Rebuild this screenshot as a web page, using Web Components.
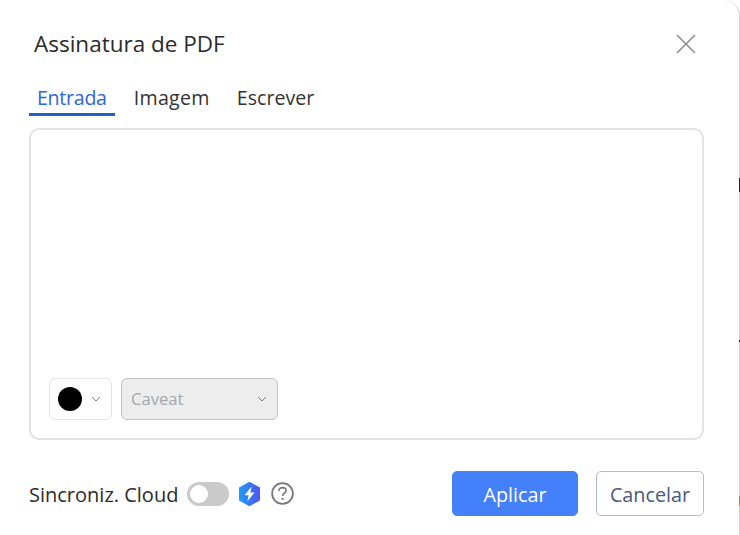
<!DOCTYPE html>
<html lang="pt">
<head>
<meta charset="utf-8">
<title>Assinatura de PDF</title>
<style>
  html, body { margin: 0; height: 100%; background: #fff; }
  body { font-family: "Open Sans", "Noto Sans", sans-serif; overflow: hidden; }
</style>
</head>
<body>
<pdf-sign-dialog>
  <span slot="title">Assinatura de PDF</span>
  <sign-tabs slot="tabs"></sign-tabs>
  <sign-pad slot="pad"></sign-pad>
  <cloud-sync slot="sync">Sincroniz. Cloud</cloud-sync>
  <sign-button slot="actions" kind="primary">Aplicar</sign-button>
  <sign-button slot="actions">Cancelar</sign-button>
</pdf-sign-dialog>

<script>
// Dialog frame
class PdfSignDialog extends HTMLElement {
  constructor() {
    super();
    this.attachShadow({ mode: 'open' });
    this.shadowRoot.innerHTML = `
      <style>
        :host { display: block; box-sizing: border-box; width: 740px; height: 535px; position: relative; background: #fff; }
        .frame { box-sizing: border-box; height: 535px; width: 740px; background: #fff; border-right: 1px solid #cfcfcf; border-top-right-radius: 16px; padding: 0 35px 0 29px; display: flex; flex-direction: column; }
        header { height: 88px; display: flex; align-items: center; justify-content: space-between; padding: 0 8px 0 5px; box-sizing: border-box; }
        .title { font-size: 22.5px; color: #2b2b2b; white-space: nowrap; margin-bottom: 2px; }
        svg { display: block; }
        footer { margin-top: 31px; display: flex; align-items: center; justify-content: space-between; }
        .actions { display: flex; gap: 18px; }
        .mark { position: absolute; right: 0; width: 1px; }
      </style>
      <div class="frame">
        <header>
          <span class="title"><slot name="title"></slot></span>
          <svg width="20" height="20" viewBox="0 0 20 20"><path d="M1 1L19 19M19 1L1 19" stroke="#858585" stroke-width="1.4" fill="none"/></svg>
        </header>
        <slot name="tabs"></slot>
        <slot name="pad"></slot>
        <footer>
          <slot name="sync"></slot>
          <div class="actions"><slot name="actions"></slot></div>
        </footer>
      </div>
      <i class="mark" style="top:178px;height:14px;background:#222"></i>
      <i class="mark" style="top:340px;height:2px;background:#222"></i>
      <i class="mark" style="top:496px;height:10px;background:#b08a5a"></i>
    `;
  }
}

// Entrada / Imagem / Escrever
class SignTabs extends HTMLElement {
  constructor() {
    super();
    this.attachShadow({ mode: 'open' });
    this.shadowRoot.innerHTML = `
      <style>
        :host { display: flex; height: 28px; font-size: 19.6px; color: #333; margin-bottom: 12px; }
        div { box-sizing: border-box; height: 28px; line-height: 20px; padding: 0 8px; margin-right: 11px; white-space: nowrap; }
        .on { color: #2e66d8; border-bottom: 3px solid #2260c9; letter-spacing: -0.28px; }
        .wide { letter-spacing: 0.3px; }
      </style>
      <div class="on">Entrada</div>
      <div class="wide">Imagem</div>
      <div>Escrever</div>
    `;
  }
}

// Drawing area with colour and font pickers
class SignPad extends HTMLElement {
  constructor() {
    super();
    this.attachShadow({ mode: 'open' });
    const chev = '<svg width="10" height="6" viewBox="0 0 10 6"><path d="M1 1L5 5L9 1" stroke="#777" stroke-width="1" fill="none"/></svg>';
    this.shadowRoot.innerHTML = `
      <style>
        :host { display: flex; box-sizing: border-box; height: 312px; border: 2px solid #e2e2e2; border-radius: 10px; padding: 0 18px 18px; align-items: flex-end; gap: 9px; }
        .pick { box-sizing: border-box; height: 42px; border-radius: 6px; display: flex; align-items: center; }
        .color { width: 63px; border: 1px solid #e4e4e4; padding: 0 10px 0 8px; justify-content: space-between; background: #fff; }
        .dot { width: 24px; height: 24px; border-radius: 50%; background: #000; }
        .font { width: 157px; border: 1px solid #c2c2c2; background: #ededed; padding: 0 10px 0 9px; justify-content: space-between; color: #a3a8b0; font-size: 16.6px; }
        .font span { margin-bottom: 2px; }
      </style>
      <div class="pick color"><span class="dot"></span>${chev}</div>
      <div class="pick font"><span>Caveat</span>${chev}</div>
    `;
  }
}

// Cloud sync switch, premium badge and help
class CloudSync extends HTMLElement {
  constructor() {
    super();
    this.attachShadow({ mode: 'open' });
    this.shadowRoot.innerHTML = `
      <style>
        :host { display: flex; align-items: center; font-size: 20px; color: #2b2b2b; }
        .label { margin-right: 9px; margin-top: 2px; white-space: nowrap; }
        .switch { box-sizing: border-box; width: 42px; height: 24px; border-radius: 12px; background: #cacaca; padding: 3px; margin-right: 9px; }
        .knob { display: block; width: 18px; height: 18px; border-radius: 50%; background: #fff; }
        svg { display: block; }
      </style>
      <span class="label"><slot></slot></span>
      <span class="switch"><span class="knob"></span></span>
      <svg width="23" height="24" viewBox="0 0 23 24" style="margin-right:10px">
        <defs><linearGradient id="g" x1="0" y1="0" x2="1" y2="0"><stop offset="0" stop-color="#1d9bf8"/><stop offset="1" stop-color="#4f56f2"/></linearGradient></defs>
        <path d="M11.5 1L21 6.2V17.8L11.5 23L2 17.8V6.2Z" fill="url(#g)" stroke="url(#g)" stroke-width="2" stroke-linejoin="round"/>
        <path d="M13.6 4.5L6.5 13.2H10.6L9.2 19.5L16.5 10.6H12.3Z" fill="#fff"/>
      </svg>
      <svg width="23" height="23" viewBox="0 0 23 23">
        <circle cx="11.5" cy="11.5" r="10.4" fill="none" stroke="#757575" stroke-width="1.7"/>
        <path d="M7.9 9C7.9 6.6 9.6 5.6 11.5 5.6C13.5 5.6 15.1 6.9 15.1 8.7C15.1 10.9 11.6 11 11.6 14" fill="none" stroke="#757575" stroke-width="1.6"/>
        <circle cx="11.6" cy="16.9" r="1.1" fill="#757575"/>
      </svg>
    `;
  }
}

// Footer buttons
class SignButton extends HTMLElement {
  constructor() {
    super();
    this.attachShadow({ mode: 'open' });
    this.shadowRoot.innerHTML = `
      <style>
        :host { display: flex; box-sizing: border-box; height: 45px; width: 108px; border: 1px solid #b4bdcc; border-radius: 5px; padding-top: 2px; align-items: center; justify-content: center; font-size: 19.8px; color: #4a5a7c; background: #fff; }
        :host([kind="primary"]) { width: 126px; border-color: #4580fb; background: #4580fb; color: #fff; }
      </style>
      <slot></slot>
    `;
  }
}

customElements.define('pdf-sign-dialog', PdfSignDialog);
customElements.define('sign-tabs', SignTabs);
customElements.define('sign-pad', SignPad);
customElements.define('cloud-sync', CloudSync);
customElements.define('sign-button', SignButton);
</script>
</body>
</html>
